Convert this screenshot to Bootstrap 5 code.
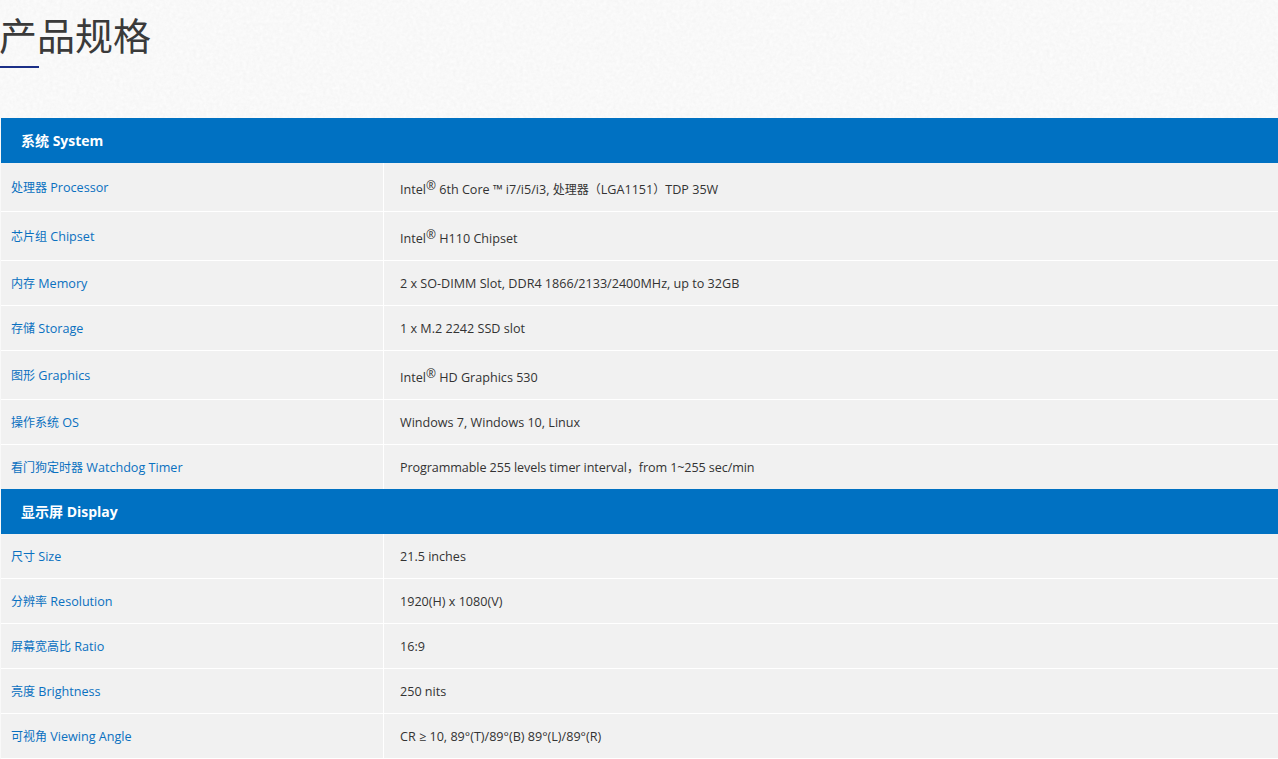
<!DOCTYPE html>
<html lang="zh-CN">
<head>
<meta charset="utf-8">
<title>产品规格</title>
<link href="https://cdn.jsdelivr.net/npm/bootstrap@5.3.0/dist/css/bootstrap.min.css" rel="stylesheet">
<style>
html,body{margin:0;height:759px;overflow:hidden;background:#f9f9f9}
body{position:relative;font-family:"Open Sans","Noto Sans CJK SC",sans-serif;font-size:12.6px;color:#333}
.paper{position:absolute;left:0;top:0;width:1278px;height:130px;z-index:0}
.spec-page{position:relative;z-index:1}
.spec-head{height:118px;padding-top:9px}
.spec-title{font-family:"Noto Sans CJK SC",sans-serif;font-weight:400;font-size:38px;line-height:50px;color:#3a3a3a;margin:0 0 0 -1px}
.spec-rule{width:39px;height:2px;background:#1b2f87;margin-top:7px}
.spec-table{width:1277px;margin:0 0 0 1px;border-collapse:separate;border-spacing:0;table-layout:fixed;background:#f1f1f1}
.spec-table col.c1{width:383px}
.spec-table th.group{background:#0071c2;color:#fff;height:45px;padding:0 0 0 20px;font-size:14px;font-weight:700;vertical-align:middle;border:0}
.spec-table td{border-bottom:1px solid #fff;padding:2px 0 0;vertical-align:middle;line-height:20px;height:45px}
.spec-table tr.tall td{height:49px}
.spec-table tr.end td{height:44px;border-bottom:0}
.spec-table td.lbl{padding-left:10px;border-right:1px solid #fff;color:#0a70c0}
.spec-table td.val{padding-left:16px;color:#333}
.spec-table tr.tall td.val{padding-top:5px}
.spec-table tr.tall td.lbl{padding-top:1px}
.spec-table tr.end td.val{letter-spacing:-.1px}
.spec-table sup{font-size:12px;top:-.3em}
.han{font-size:12px}
</style>
</head>
<body>
<svg class="paper" aria-hidden="true">
<filter id="grain"><feTurbulence type="fractalNoise" baseFrequency="0.3" numOctaves="3" seed="4"/><feColorMatrix values="0 0 0 0 .88  0 0 0 0 .88  0 0 0 0 .88  .6 .6 0 0 -.28"/></filter>
<rect width="1278" height="130" fill="#fcfcfc"/>
<rect width="1278" height="130" filter="url(#grain)"/>
</svg>
<div class="spec-page">
<header class="spec-head">
<h1 class="spec-title">产品规格</h1>
<div class="spec-rule"></div>
</header>
<table class="spec-table">
<colgroup><col class="c1"><col></colgroup>
<tbody>
<tr><th class="group" colspan="2">系统 System</th></tr>
<tr class="tall"><td class="lbl"><span class="han">处理器</span> Processor</td><td class="val">Intel<sup>®</sup> 6th Core ™ i7/i5/i3, <span class="han">处理器（</span>LGA1151<span class="han">）</span>TDP 35W</td></tr>
<tr class="tall"><td class="lbl"><span class="han">芯片组</span> Chipset</td><td class="val">Intel<sup>®</sup> H110 Chipset</td></tr>
<tr><td class="lbl"><span class="han">内存</span> Memory</td><td class="val">2 x SO-DIMM Slot, DDR4 1866/2133/2400MHz, up to 32GB</td></tr>
<tr><td class="lbl"><span class="han">存储</span> Storage</td><td class="val">1 x M.2 2242 SSD slot</td></tr>
<tr class="tall"><td class="lbl"><span class="han">图形</span> Graphics</td><td class="val">Intel<sup>®</sup> HD Graphics 530</td></tr>
<tr><td class="lbl"><span class="han">操作系统</span> OS</td><td class="val">Windows 7, Windows 10, Linux</td></tr>
<tr class="end"><td class="lbl"><span class="han">看门狗定时器</span> Watchdog Timer</td><td class="val">Programmable 255 levels timer interval<span class="han">，</span>from 1~255 sec/min</td></tr>
<tr><th class="group" colspan="2">显示屏 Display</th></tr>
<tr><td class="lbl"><span class="han">尺寸</span> Size</td><td class="val">21.5 inches</td></tr>
<tr><td class="lbl"><span class="han">分辨率</span> Resolution</td><td class="val">1920(H) x 1080(V)</td></tr>
<tr><td class="lbl"><span class="han">屏幕宽高比</span> Ratio</td><td class="val">16:9</td></tr>
<tr><td class="lbl"><span class="han">亮度</span> Brightness</td><td class="val">250 nits</td></tr>
<tr><td class="lbl"><span class="han">可视角</span> Viewing Angle</td><td class="val">CR ≥ 10, 89°(T)/89°(B) 89°(L)/89°(R)</td></tr>
</tbody>
</table>
</div>
<script src="https://cdn.jsdelivr.net/npm/bootstrap@5.3.0/dist/js/bootstrap.bundle.min.js"></script>
</body>
</html>
